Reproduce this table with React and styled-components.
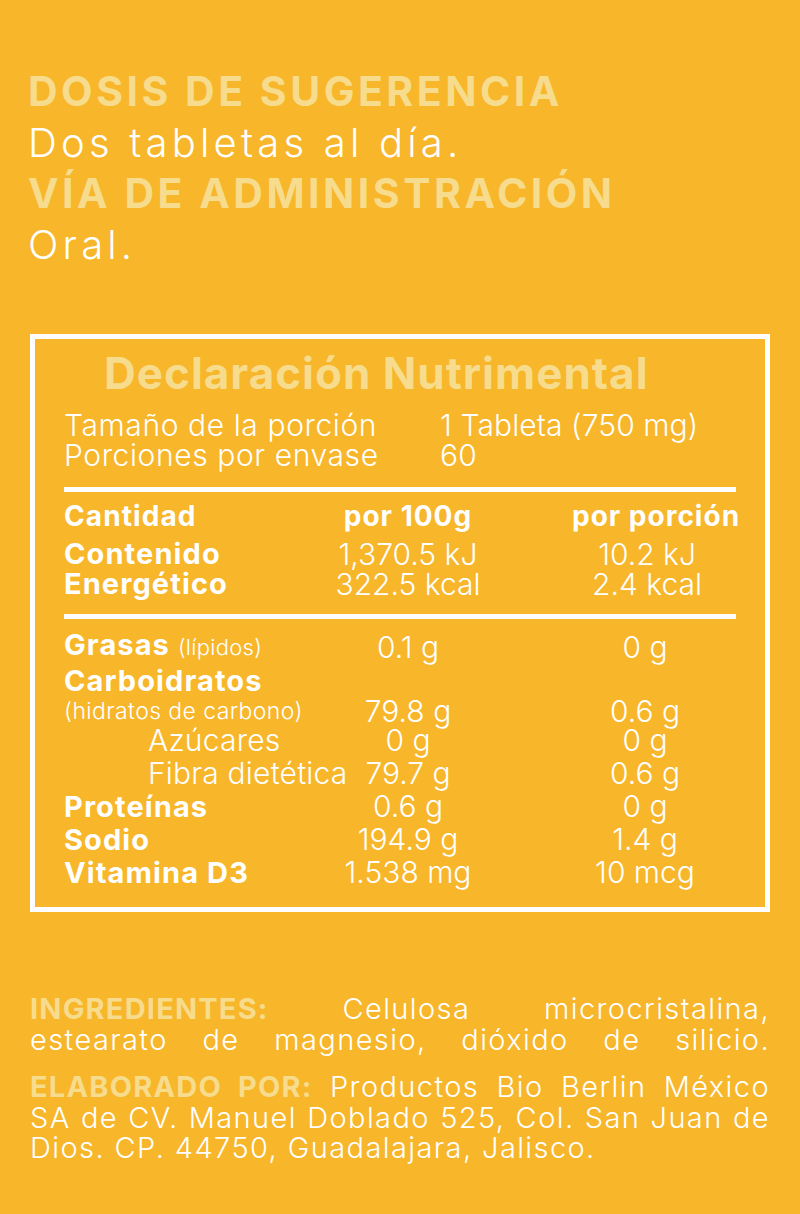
import React from "react";
import styled, { createGlobalStyle } from "styled-components";

const BG = "#F8B62B";
const PALE = "#F6DC8C";
const FONT = `"Inter", "Noto Sans", "Liberation Sans", sans-serif`;

const Global = createGlobalStyle`
  html, body { margin: 0; padding: 0; background: ${BG}; }
  body { font-family: ${FONT}; color: #fff; }
  * { box-sizing: border-box; }
`;

const Page = styled.main`
  width: 800px;
  min-height: 1214px;
  background: ${BG};
  padding: 66px 30px 0 30px;
  display: flex;
  flex-direction: column;
`;

const Dose = styled.section`
  display: flex;
  flex-direction: column;
`;

const Heading = styled.h2`
  margin: 0 0 0 -2px;
  font-size: 41px;
  line-height: 51px;
  font-weight: 700;
  letter-spacing: 3.5px;
  color: ${PALE};
  text-transform: uppercase;
  white-space: nowrap;
`;

const Plain = styled.p`
  margin: 0 0 0 -2px;
  font-size: 40px;
  line-height: 51px;
  font-weight: 300;
  letter-spacing: 4.2px;
  color: #fff;
`;

const Box = styled.section`
  margin-top: 64px;
  border: 5px solid #fff;
  padding: 9px 29px 18px 29px;
  display: flex;
  flex-direction: column;
`;

const Title = styled.h1`
  margin: 0 0 0 40px;
  font-size: 44px;
  line-height: 50px;
  font-weight: 700;
  letter-spacing: 1px;
  color: ${PALE};
  white-space: nowrap;
`;

const Serving = styled.div`
  margin-top: 12px;
  display: grid;
  grid-template-columns: 376px 1fr;
  font-size: 30px;
  line-height: 30px;
  font-weight: 300;
  letter-spacing: 0.6px;
  white-space: nowrap;
`;

const ServingValue = styled.div`
  letter-spacing: 0.1px;
`;

const Divider = styled.hr`
  margin: ${(p) => p.$top}px 0 0 0;
  border: 0;
  height: 5px;
  background: #fff;
`;

const Table = styled.div`
  margin-top: ${(p) => p.$top}px;
  display: grid;
  grid-template-columns: 266px 156px 1fr;
  align-items: end;
`;

const Label = styled.div`
  font-size: ${(p) => p.$size || 29}px;
  line-height: ${(p) => p.$lh || 34}px;
  font-weight: ${(p) => (p.$bold ? 700 : 300)};
  letter-spacing: ${(p) => (p.$bold ? 1.1 : 0.2)}px;
  padding-left: ${(p) => p.$indent || 0}px;
  margin-top: ${(p) => p.$mt || 0}px;
  white-space: nowrap;
`;

const Small = styled.span`
  font-size: 22px;
  font-weight: 300;
  letter-spacing: 0.3px;
`;

const Sub = styled.span`
  display: block;
  font-size: 23px;
  line-height: 26px;
  font-weight: 300;
  letter-spacing: 0.4px;
`;

const Value = styled.div`
  font-size: ${(p) => p.$size || 30}px;
  line-height: ${(p) => p.$lh || 34}px;
  font-weight: ${(p) => (p.$bold ? 700 : 300)};
  letter-spacing: ${(p) => (p.$bold ? 1 : 0)}px;
  text-align: center;
  white-space: nowrap;
  padding-left: ${(p) => p.$pad || 0}px;
  margin-top: ${(p) => p.$mt || 0}px;
`;

const Notes = styled.section`
  margin-top: 82px;
  display: flex;
  flex-direction: column;
  gap: 17px;
`;

const Para = styled.div`
  font-size: 29px;
  line-height: 30.5px;
  font-weight: 300;
  letter-spacing: 1.4px;
`;

const Line = styled.div`
  text-align: ${(p) => (p.$justify ? "justify" : "left")};
  text-align-last: ${(p) => (p.$justify ? "justify" : "left")};
  white-space: nowrap;
`;

const Key = styled.span`
  font-weight: 700;
  letter-spacing: 1.2px;
  color: ${PALE};
`;

const rows = [
  { label: "Proteínas", a: "0.6 g", b: "0 g" },
  { label: "Sodio", a: "194.9 g", b: "1.4 g" },
  { label: "Vitamina D3", a: "1.538 mg", b: "10 mcg" },
];

export default function App() {
  return (
    <>
      <Global />
      <Page>
        <Dose>
          <Heading>Dosis de sugerencia</Heading>
          <Plain>Dos tabletas al día.</Plain>
          <Heading>Vía de administración</Heading>
          <Plain>Oral.</Plain>
        </Dose>

        <Box>
          <Title>Declaración Nutrimental</Title>
          <Serving>
            <div>Tamaño de la porción</div>
            <ServingValue>1 Tableta (750 mg)</ServingValue>
            <div>Porciones por envase</div>
            <ServingValue>60</ServingValue>
          </Serving>

          <Divider $top={17} />

          <Table $top={9}>
            <Label $bold $lh={30} $size={28}>Cantidad</Label>
            <Value $bold $size={28} $lh={30}>por 100g</Value>
            <Value $bold $size={28} $lh={30} $pad={86}>por porción</Value>

            <Label $bold $lh={30} $mt={8}>
              Contenido
              <br />
              Energético
            </Label>
            <Value $lh={30} $mt={8}>
              1,370.5 kJ
              <br />
              322.5 kcal
            </Value>
            <Value $lh={30} $pad={68} $mt={8}>
              10.2 kJ
              <br />
              2.4 kcal
            </Value>
          </Table>

          <Divider $top={15} />

          <Table $top={9}>
            <Label $bold>
              Grasas <Small>(lípidos)</Small>
            </Label>
            <Value>0.1 g</Value>
            <Value $pad={68}>0 g</Value>

            <Label $bold>
              Carboidratos
              <Sub>(hidratos de carbono)</Sub>
            </Label>
            <Value $lh={26}>79.8 g</Value>
            <Value $lh={26} $pad={68}>0.6 g</Value>

            <Label $size={30} $lh={33} $indent={84}>Azúcares</Label>
            <Value $lh={33}>0 g</Value>
            <Value $lh={33} $pad={68}>0 g</Value>

            <Label $size={30} $lh={33} $indent={84}>Fibra dietética</Label>
            <Value $lh={33}>79.7 g</Value>
            <Value $lh={33} $pad={68}>0.6 g</Value>

            {rows.map((r) => (
              <React.Fragment key={r.label}>
                <Label $bold $lh={33}>{r.label}</Label>
                <Value $lh={33}>{r.a}</Value>
                <Value $lh={33} $pad={68}>{r.b}</Value>
              </React.Fragment>
            ))}
          </Table>
        </Box>

        <Notes>
          <Para>
            <Line $justify>
              <Key>INGREDIENTES:</Key> Celulosa microcristalina,
            </Line>
            <Line $justify>estearato de magnesio, dióxido de silicio.</Line>
          </Para>
          <Para>
            <Line $justify>
              <Key>ELABORADO POR:</Key> Productos Bio Berlin México
            </Line>
            <Line $justify>SA de CV. Manuel Doblado 525, Col. San Juan de</Line>
            <Line>Dios. CP. 44750, Guadalajara, Jalisco.</Line>
          </Para>
        </Notes>
      </Page>
    </>
  );
}
